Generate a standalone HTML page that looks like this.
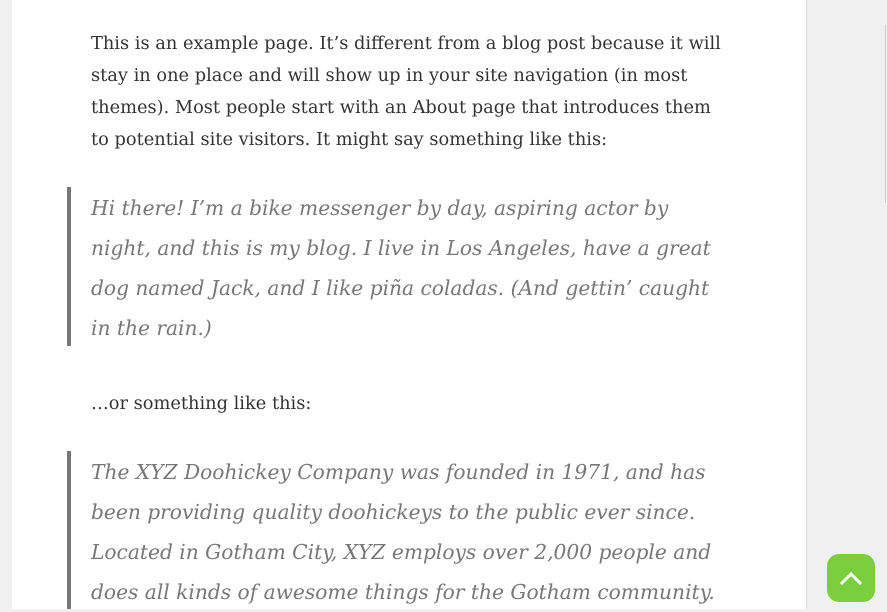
<!DOCTYPE html>
<html><head><meta charset="utf-8"><style>
html,body{margin:0;padding:0;width:887px;height:609px;overflow:hidden;background:#f0f0f0}
.card{position:absolute;left:12px;top:0;width:794px;height:609px;background:#fff;border-right:1px solid #ddd}
.t{position:absolute;left:91px;white-space:nowrap;font-family:"DejaVu Serif","Liberation Serif",serif;color:#333}
p.t{margin:0;font-size:17.8px;line-height:32px}
.q{font-style:italic;font-size:20.2px;line-height:40px;color:#777}
.bar{position:absolute;left:67px;width:4px;background:#777}
.line{position:absolute;left:885px;top:25px;width:1px;height:178px;background:#ccc}
.btn{position:absolute;left:827px;top:554px;width:48px;height:48px;border-radius:12px;background:#7bcf3f}
</style></head><body>
<div class="card"></div>
<div class="line"></div>
<p class="t" style="top:28px">This is an example page. It’s different from a blog post because it will<br>stay in one place and will show up in your site navigation (in most<br>themes). Most people start with an About page that introduces them<br>to potential site visitors. It might say something like this:</p>
<div class="bar" style="top:187px;height:159px"></div>
<div class="t q" style="top:188px">Hi there! I’m a bike messenger by day, aspiring actor by<br>night, and this is my blog. I live in Los Angeles, have a great<br>dog named Jack, and I like piña coladas. (And gettin’ caught<br>in the rain.)</div>
<p class="t" style="top:388px">…or something like this:</p>
<div class="bar" style="top:451px;height:158px"></div>
<div class="t q" style="top:452px">The XYZ Doohickey Company was founded in 1971, and has<br>been providing quality doohickeys to the public ever since.<br>Located in Gotham City, XYZ employs over 2,000 people and<br>does all kinds of awesome things for the Gotham community.</div>
<div class="btn"><svg width="48" height="48" viewBox="0 0 48 48"><path d="M14 30 L24 20 L34 30" fill="none" stroke="#fff" stroke-width="3"/></svg></div>
</body></html>
